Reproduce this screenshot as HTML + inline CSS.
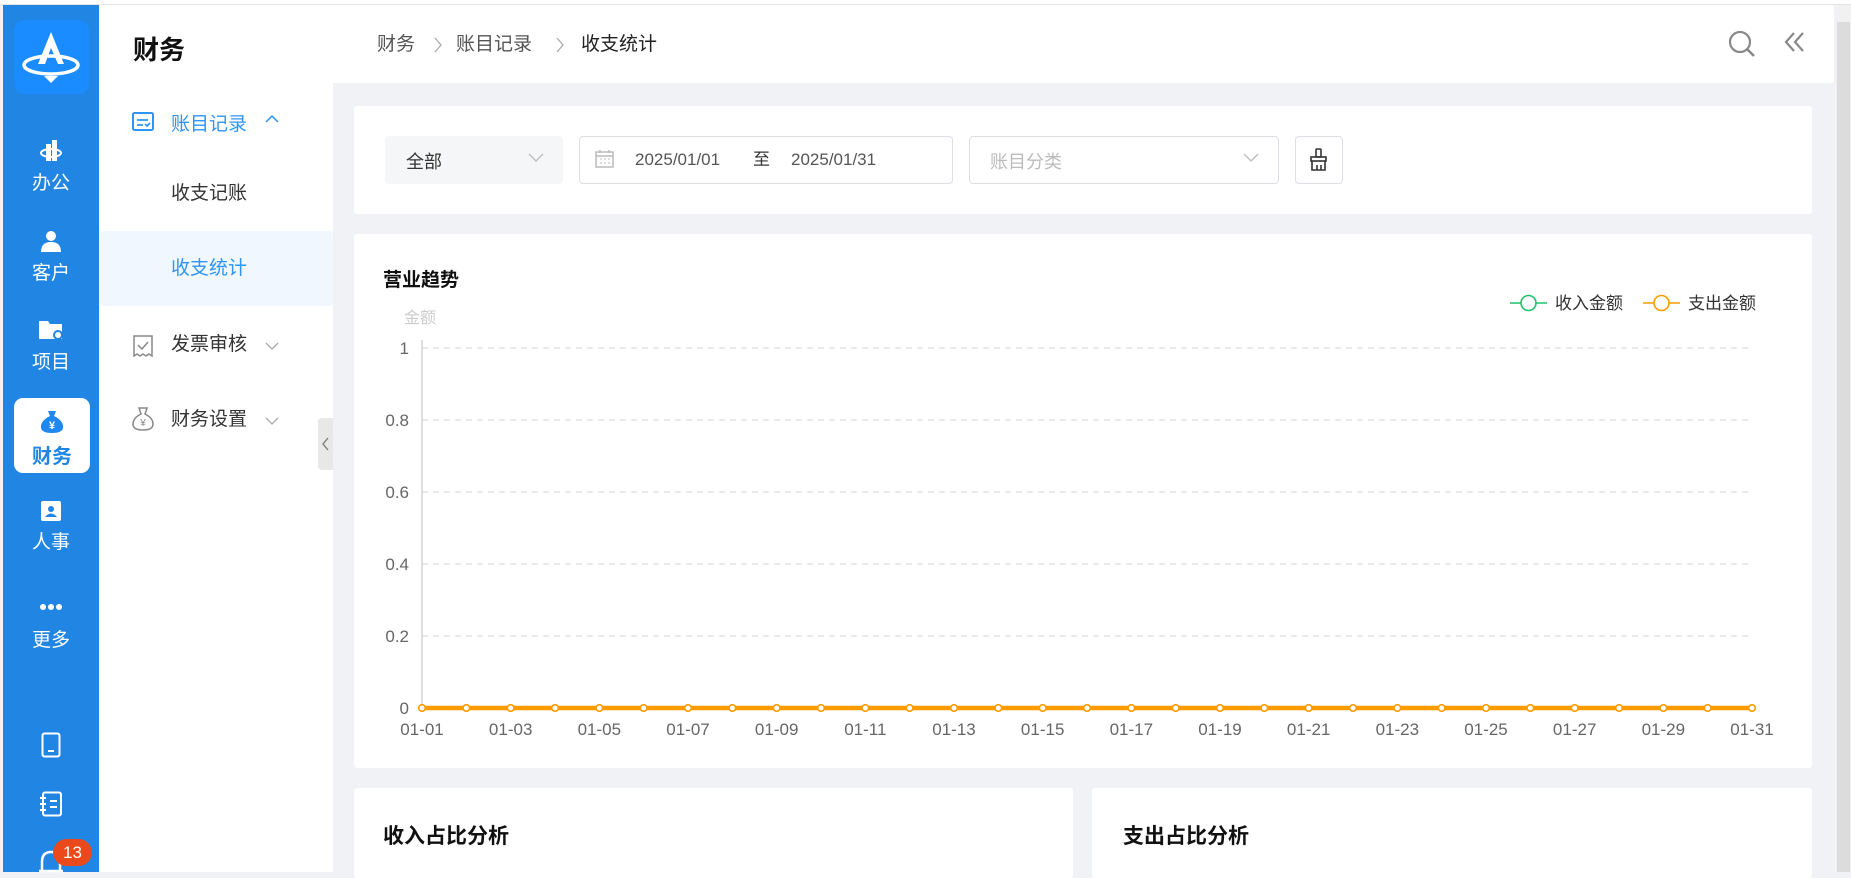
<!DOCTYPE html>
<html><head><meta charset="utf-8"><style>
*{margin:0;padding:0;box-sizing:border-box}
body{width:1851px;height:872px;overflow:hidden;background:#f0f2f5;font-family:"Liberation Sans","Noto Sans CJK SC",sans-serif;position:relative}
.a{position:absolute}
.side{left:3px;top:5px;width:96px;height:867px;background:#2185e4}
.nav{position:absolute;left:0;width:96px;text-align:center;color:#fff;font-size:19px}
.menu{left:99px;top:5px;width:234px;height:867px;background:#fff}
.mi{position:absolute;left:72px;font-size:19px;color:#333;line-height:24px}
.card{background:#fff;border-radius:3px}
.sel{border:1px solid #dcdfe6;border-radius:4px;background:#fff}
.dt{position:absolute;top:136px;line-height:48px;font-size:17px;color:#555}
</style></head><body>
<div class="a" style="left:0;top:0;width:1851px;height:5px;background:#fff;border-bottom:1px solid #e4e4e4"></div>
<div class="a side">
  <div class="a" style="left:11px;top:15px;width:75px;height:74px;background:#1a8cff;border-radius:10px">
    <svg width="75" height="74" viewBox="0 0 75 74"><path d="M37 12 L24 44 H31 L37 28 L44 44 H50 Z" fill="#fff"/><ellipse cx="37" cy="45" rx="27" ry="9" fill="none" stroke="#fff" stroke-width="3.5"/><path d="M30 56 L37 63 L44 56 Z" fill="#fff"/></svg>
  </div>
  <div class="nav" style="top:135px"><svg width="24" height="22" viewBox="0 0 24 22"><rect x="7" y="4" width="5" height="17" fill="#fff"/><rect x="13" y="0" width="5" height="21" fill="#fff"/><ellipse cx="12" cy="13" rx="10" ry="4" fill="none" stroke="#fff" stroke-width="2"/></svg><div style="margin-top:0">办公</div></div>
  <div class="nav" style="top:225px"><svg width="22" height="22" viewBox="0 0 22 22"><circle cx="11" cy="6" r="5" fill="#fff"/><path d="M1 22 Q1 12 11 12 Q21 12 21 22Z" fill="#fff"/></svg><div>客户</div></div>
  <div class="nav" style="top:314px"><svg width="26" height="22" viewBox="0 0 26 22"><path d="M1 2 H10 L12 5 H24 V20 H1Z" fill="#fff"/><circle cx="20" cy="16" r="5" fill="#2185e4"/><circle cx="20" cy="16" r="3" fill="#fff"/></svg><div>项目</div></div>
  <div class="a" style="left:11px;top:393px;width:76px;height:75px;background:#fff;border-radius:9px;text-align:center;color:#2185e4;font-size:20px;font-weight:bold">
    <svg style="margin-top:12px" width="26" height="24" viewBox="0 0 26 24"><path d="M9 1 H17 L15 6 Q25 11 24 18 Q23 23 13 23 Q3 23 2 18 Q1 11 11 6Z" fill="#1e88f0"/><text x="13" y="19" font-size="11" fill="#fff" text-anchor="middle" font-family="Liberation Sans">¥</text></svg>
    <div>财务</div></div>
  <div class="nav" style="top:494px"><svg width="20" height="22" viewBox="0 0 20 22"><rect x="0" y="2" width="20" height="20" rx="2" fill="#fff"/><circle cx="10" cy="10" r="3" fill="#2185e4"/><path d="M4 18 Q10 11 16 18Z" fill="#2185e4"/></svg><div>人事</div></div>
  <div class="nav" style="top:590px"><svg width="24" height="8"><circle cx="4" cy="4" r="3" fill="#fff"/><circle cx="12" cy="4" r="3" fill="#fff"/><circle cx="20" cy="4" r="3" fill="#fff"/></svg><div style="margin-top:8px">更多</div></div>
  <svg class="a" style="left:38px;top:727px" width="20" height="26"><rect x="1.5" y="1.5" width="17" height="23" rx="2" fill="none" stroke="#fff" stroke-width="2"/><rect x="7" y="18" width="6" height="2" fill="#fff"/></svg>
  <svg class="a" style="left:36px;top:786px" width="24" height="26"><rect x="4" y="1.5" width="18" height="23" rx="2" fill="none" stroke="#fff" stroke-width="2"/><path d="M1 7H7M1 13H7M1 19H7M11 10H18M11 16H18" stroke="#fff" stroke-width="2"/></svg>
  <svg class="a" style="left:36px;top:840px" width="24" height="30"><path d="M3 26 V17 Q3 7 12 7 Q21 7 21 17 V26 M0 26 H24" fill="none" stroke="#fff" stroke-width="2.5"/></svg>
  <div class="a" style="left:50px;top:834px;width:39px;height:27px;background:#ea4a1b;border-radius:14px;color:#fff;font-size:17px;text-align:center;line-height:27px">13</div>
</div>
<div class="a menu">
  <div class="a" style="left:34px;top:25px;font-size:26px;font-weight:bold;color:#111">财务</div>
  <svg class="a" style="left:33px;top:107px" width="22" height="20"><rect x="1" y="1" width="20" height="17" rx="1.5" fill="none" stroke="#2f95f5" stroke-width="2"/><path d="M5 8H16M5 13H11M13 12L15 14L18 11" fill="none" stroke="#2f95f5" stroke-width="1.8"/></svg>
  <div class="mi" style="top:108px;color:#2f95f5">账目记录</div>
  <svg class="a" style="left:166px;top:109px" width="14" height="10"><path d="M1 8L7 2L13 8" fill="none" stroke="#2f95f5" stroke-width="1.5"/></svg>
  <div class="mi" style="top:177px">收支记账</div>
  <div class="a" style="left:1px;top:226px;width:233px;height:75px;background:#f0f7ff;border-radius:4px"></div>
  <div class="mi" style="top:252px;color:#2f95f5">收支统计</div>
  <svg class="a" style="left:34px;top:330px" width="20" height="22"><path d="M1 1H19V21L16 19L13 21L10 19L7 21L4 19L1 21Z" fill="none" stroke="#888" stroke-width="1.5"/><path d="M5 10L9 14L15 7" fill="none" stroke="#888" stroke-width="1.5"/></svg>
  <div class="mi" style="top:328px">发票审核</div>
  <svg class="a" style="left:166px;top:336px" width="14" height="10"><path d="M1 2L7 8L13 2" fill="none" stroke="#aaa" stroke-width="1.3"/></svg>
  <svg class="a" style="left:33px;top:402px" width="22" height="24"><path d="M7 1H15L13 7Q21 11 21 17Q21 23 11 23Q1 23 1 17Q1 11 9 7Z" fill="none" stroke="#888" stroke-width="1.5"/><text x="11" y="19" font-size="10" fill="#888" text-anchor="middle" font-family="Liberation Sans">¥</text></svg>
  <div class="mi" style="top:403px">财务设置</div>
  <svg class="a" style="left:166px;top:411px" width="14" height="10"><path d="M1 2L7 8L13 2" fill="none" stroke="#aaa" stroke-width="1.3"/></svg>
  <div class="a" style="left:219px;top:413px;width:15px;height:52px;background:#e8e8e8;border-radius:4px 0 0 4px"></div>
  <svg class="a" style="left:222px;top:432px" width="10" height="14"><path d="M7 1L2 7L7 13" fill="none" stroke="#777" stroke-width="1.3"/></svg>
</div>
<div class="a" style="left:333px;top:5px;width:1501px;height:78px;background:#fff"></div>
<div class="a" style="left:377px;top:33px;font-size:19px;color:#555;line-height:24px">财务</div>
<svg class="a" style="left:433px;top:36px" width="10" height="18"><path d="M2 2L8 9L2 16" fill="none" stroke="#aaa" stroke-width="1.3"/></svg>
<div class="a" style="left:456px;top:33px;font-size:19px;color:#555;line-height:24px">账目记录</div>
<svg class="a" style="left:555px;top:36px" width="10" height="18"><path d="M2 2L8 9L2 16" fill="none" stroke="#aaa" stroke-width="1.3"/></svg>
<div class="a" style="left:581px;top:33px;font-size:19px;color:#222;line-height:24px">收支统计</div>
<svg class="a" style="left:1728px;top:30px" width="30" height="30"><circle cx="12" cy="12" r="10" fill="none" stroke="#888" stroke-width="2.2"/><path d="M19 19L26 26" stroke="#888" stroke-width="2.4"/></svg>
<svg class="a" style="left:1783px;top:31px" width="24" height="24"><path d="M11 2L3 11L11 20M20 2L12 11L20 20" fill="none" stroke="#888" stroke-width="2.2"/></svg>
<div class="a" style="left:1836px;top:5px;width:15px;height:867px;background:#f1f1f1"></div>
<div class="a" style="left:1837px;top:22px;width:13px;height:850px;background:#dcdcdc"></div>

<div class="a card" style="left:354px;top:106px;width:1458px;height:108px"></div>
<div class="a" style="left:385px;top:136px;width:178px;height:48px;background:#f5f6f7;border-radius:4px"></div>
<div class="a" style="left:406px;top:148px;font-size:18px;color:#333">全部</div>
<svg class="a" style="left:528px;top:153px" width="16" height="10"><path d="M1 1L8 8L15 1" fill="none" stroke="#bbb" stroke-width="1.3"/></svg>
<div class="a sel" style="left:579px;top:136px;width:374px;height:48px"></div>
<svg class="a" style="left:595px;top:149px" width="19" height="19"><rect x="1" y="3" width="17" height="15" fill="none" stroke="#bbb" stroke-width="1.5"/><path d="M1 7H18M5 1V4M14 1V4" stroke="#bbb" stroke-width="1.5"/><path d="M5 10H7M9 10H11M13 10H15M5 14H7M9 14H11M13 14H15" stroke="#bbb"/></svg>
<div class="dt" style="left:635px">2025/01/01</div>
<div class="dt" style="left:753px;color:#333">至</div>
<div class="dt" style="left:791px">2025/01/31</div>
<div class="a sel" style="left:969px;top:136px;width:310px;height:48px"></div>
<div class="a" style="left:990px;top:148px;font-size:18px;color:#bbb">账目分类</div>
<svg class="a" style="left:1243px;top:153px" width="16" height="10"><path d="M1 1L8 8L15 1" fill="none" stroke="#bbb" stroke-width="1.3"/></svg>
<div class="a sel" style="left:1295px;top:136px;width:48px;height:48px"></div>
<svg class="a" style="left:1309px;top:148px" width="20" height="24"><rect x="7" y="1" width="5" height="8" rx="1" fill="none" stroke="#333" stroke-width="1.6"/><rect x="2" y="9" width="15" height="4" fill="none" stroke="#333" stroke-width="1.6"/><path d="M3 13V22H16V13M8 17V22M12 17V22" fill="none" stroke="#333" stroke-width="1.6"/></svg>

<div class="a card" style="left:354px;top:234px;width:1458px;height:534px"></div>
<div class="a" style="left:383px;top:265px;font-size:19px;font-weight:bold;color:#111">营业趋势</div>
<div class="a" style="left:404px;top:304px;font-size:16px;color:#ccc">金额</div>
<svg class="a" style="left:1505px;top:290px" width="260" height="26">
<path d="M5 13H42" stroke="#1fc26b" stroke-width="1.6"/><circle cx="23.5" cy="13" r="7.5" fill="#fff" stroke="#1fc26b" stroke-width="1.6"/>
<text x="50" y="19" font-size="17" fill="#333" font-family="Liberation Sans,Noto Sans CJK SC,sans-serif">收入金额</text>
<path d="M138 13H175" stroke="#fb9b00" stroke-width="1.6"/><circle cx="156.5" cy="13" r="7.5" fill="#fff" stroke="#fb9b00" stroke-width="1.6"/>
<text x="183" y="19" font-size="17" fill="#333" font-family="Liberation Sans,Noto Sans CJK SC,sans-serif">支出金额</text>
</svg>
<svg class="a" style="left:0;top:0" width="1851" height="872" font-family="Liberation Sans,sans-serif">
<g stroke="#ddd" stroke-dasharray="6,5" stroke-width="1.3">
<path d="M422 348H1752M422 420H1752M422 492H1752M422 564H1752M422 636H1752"/></g>
<path d="M422 340V712" stroke="#ccc" stroke-width="1.3"/>
<g fill="#666" font-size="17" text-anchor="end">
<text x="409" y="354">1</text><text x="409" y="426">0.8</text><text x="409" y="498">0.6</text><text x="409" y="570">0.4</text><text x="409" y="642">0.2</text><text x="409" y="714">0</text></g>
<path d="M422 708H1752" stroke="#fb9b00" stroke-width="4.5"/>
<g fill="#fff" stroke="#fb9b00" stroke-width="1.6" id="dots"></g>
<g fill="#666" font-size="17" text-anchor="middle" id="xl"></g>
</svg>
<script>
var d=document.getElementById('dots'),x=document.getElementById('xl'),s='',t='';
for(var i=0;i<31;i++){var px=422+i*1330/30;s+='<circle cx="'+px+'" cy="708" r="3.3"/>';
if(i%2==0){var n=i+1;t+='<text x="'+px+'" y="735">01-'+(n<10?'0'+n:n)+'</text>';}}
d.innerHTML=s;x.innerHTML=t;
</script>
<div class="a card" style="left:354px;top:788px;width:719px;height:90px"></div>
<div class="a card" style="left:1092px;top:788px;width:720px;height:90px"></div>
<div class="a" style="left:383px;top:820px;font-size:21px;font-weight:bold;color:#111">收入占比分析</div>
<div class="a" style="left:1123px;top:820px;font-size:21px;font-weight:bold;color:#111">支出占比分析</div>
</body></html>
